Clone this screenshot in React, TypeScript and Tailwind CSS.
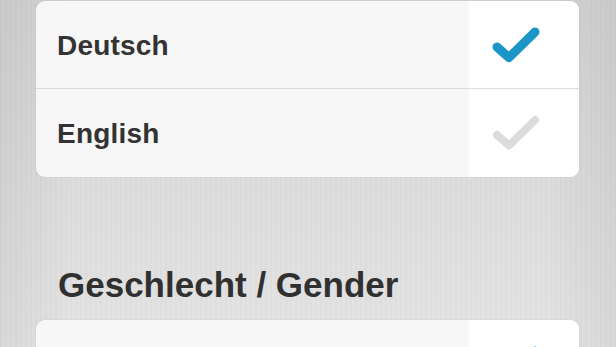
type Option = {
  label: string;
  checked: boolean;
};

const languages: Option[] = [
  { label: "Deutsch", checked: true },
  { label: "English", checked: false },
];

// only the top edge of this list is in view, labels sit below the fold
const genders: Option[] = [{ label: "", checked: true }];

const Check = ({ on }: { on: boolean }) => (
  <svg width="110" height="87" viewBox="0 0 110 87" className="block">
    <path
      d="M28 46 L40 56.5 L66 31"
      fill="none"
      stroke={on ? "#1b95c6" : "#dcdcdc"}
      strokeWidth={on ? 9 : 8}
      strokeLinecap="round"
      strokeLinejoin="round"
    />
  </svg>
);

const OptionList = ({ items }: { items: Option[] }) => (
  <div className="w-[543px] rounded-[9px] overflow-hidden bg-[#f7f7f7] shadow-[0_0_0_1px_rgba(0,0,0,0.025)]">
    {items.map((item, i) => (
      <div
        key={i}
        className={`flex h-[88px] ${i < items.length - 1 ? "border-b border-[#dcdcdc]" : ""}`}
      >
        <div className="flex-1 flex items-center pl-[21px] pt-[2px] text-[28px] font-bold text-[#333] tracking-[0.2px]">
          {item.label}
        </div>
        <div className="w-[110px] bg-white">
          <Check on={item.checked} />
        </div>
      </div>
    ))}
  </div>
);

export default function App() {
  return (
    <div
      className="h-[347px] w-full overflow-hidden pt-px pl-[36px] bg-[linear-gradient(90deg,rgba(0,0,0,0.05),transparent_12%,transparent_88%,rgba(0,0,0,0.05)),repeating-linear-gradient(90deg,rgba(0,0,0,0.015)_0px,rgba(0,0,0,0.015)_2px,transparent_2px,transparent_5px),linear-gradient(to_bottom,#d4d4d4,#dcdcdc_50%,#e4e4e4)]"
      style={{ fontFamily: '"Liberation Sans", Arial, sans-serif' }}
    >
      <OptionList items={languages} />
      <h2 className="mt-[88px] pl-[22px] text-[35px] leading-[40px] font-bold text-[#303030] h-[55px]">
        Geschlecht / Gender
      </h2>
      <OptionList items={genders} />
    </div>
  );
}
